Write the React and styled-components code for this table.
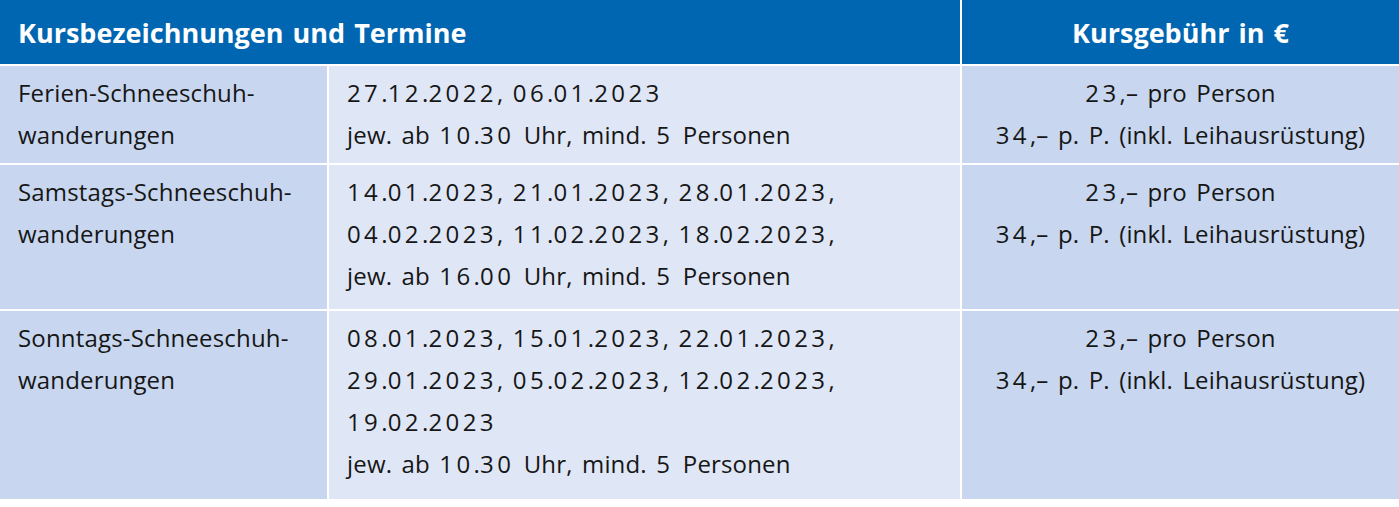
import React from "react";
import styled, { createGlobalStyle } from "styled-components";

const GlobalStyle = createGlobalStyle`
  html, body {
    margin: 0;
    padding: 0;
    background: #ffffff;
  }
  body {
    font-family: "Open Sans", "Noto Sans", sans-serif;
    color: #161616;
  }
`;

const Table = styled.div`
  display: grid;
  grid-template-columns: 327px 631px 1fr;
  grid-template-rows: 64px 97px 144px 188px;
  gap: 2px;
  width: 1399px;
  background: #ffffff;
`;

const HeadCell = styled.div`
  grid-column: ${(props) => (props.span ? `span ${props.span}` : "auto")};
  display: flex;
  align-items: center;
  justify-content: ${(props) => (props.center ? "center" : "flex-start")};
  padding: 0 18px;
  background: #0066b1;
  color: #ffffff;
  font-weight: 700;
  font-size: 27px;
  word-spacing: 2px;
`;

const Cell = styled.div`
  padding: 6px 18px 0;
  background: ${(props) => (props.light ? "#dfe6f5" : "#c8d7ef")};
  text-align: ${(props) => (props.center ? "center" : "left")};
  font-size: 24px;
  line-height: 42px;
  letter-spacing: 0.17px;
  word-spacing: 3px;
`;

const Line = styled.div`
  white-space: nowrap;
`;

// digits in the print font run much wider than Open Sans
const Num = styled.span`
  letter-spacing: 3.4px;
`;

const spaced = (text) =>
  text.split(/(\d+)/).map((part, i) =>
    /^\d+$/.test(part) ? <Num key={i}>{part}</Num> : part
  );

const rows = [
  {
    name: ["Ferien-Schneeschuh-", "wanderungen"],
    dates: ["27.12.2022, 06.01.2023", "jew. ab 10.30 Uhr, mind. 5 Personen"],
  },
  {
    name: ["Samstags-Schneeschuh-", "wanderungen"],
    dates: [
      "14.01.2023, 21.01.2023, 28.01.2023,",
      "04.02.2023, 11.02.2023, 18.02.2023,",
      "jew. ab 16.00 Uhr, mind. 5 Personen",
    ],
  },
  {
    name: ["Sonntags-Schneeschuh-", "wanderungen"],
    dates: [
      "08.01.2023, 15.01.2023, 22.01.2023,",
      "29.01.2023, 05.02.2023, 12.02.2023,",
      "19.02.2023",
      "jew. ab 10.30 Uhr, mind. 5 Personen",
    ],
  },
];

const fees = ["23,– pro Person", "34,– p. P. (inkl. Leihausrüstung)"];

const App = () => {
  return (
    <>
      <GlobalStyle />
      <Table>
        <HeadCell span={2}>Kursbezeichnungen und Termine</HeadCell>
        <HeadCell center>Kursgebühr in €</HeadCell>
        {rows.map((row) => (
          <React.Fragment key={row.name[0]}>
            <Cell>
              {row.name.map((line) => (
                <Line key={line}>{line}</Line>
              ))}
            </Cell>
            <Cell light>
              {row.dates.map((line) => (
                <Line key={line}>{spaced(line)}</Line>
              ))}
            </Cell>
            <Cell center>
              {fees.map((line) => (
                <Line key={line}>{spaced(line)}</Line>
              ))}
            </Cell>
          </React.Fragment>
        ))}
      </Table>
    </>
  );
};

export default App;
